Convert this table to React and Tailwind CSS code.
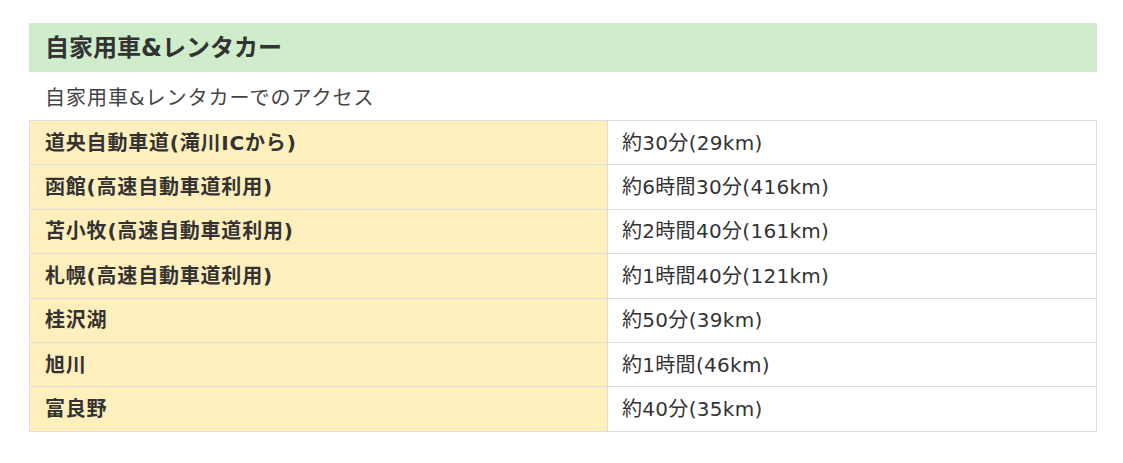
const rows = [
  ['道央自動車道(滝川ICから)', '約30分(29km)'],
  ['函館(高速自動車道利用)', '約6時間30分(416km)'],
  ['苫小牧(高速自動車道利用)', '約2時間40分(161km)'],
  ['札幌(高速自動車道利用)', '約1時間40分(121km)'],
  ['桂沢湖', '約50分(39km)'],
  ['旭川', '約1時間(46km)'],
  ['富良野', '約40分(35km)'],
];

export default function App() {
  return (
    <div className="min-h-screen bg-white text-[#333] font-['DejaVu_Sans','Noto_Sans_CJK_JP',sans-serif]">
      <div className="pt-[23px] pl-[29px] w-[1097px]">
        <h2 className="h-[49px] bg-[#cfeccb] px-[16px] flex items-center text-[24px] font-bold">
          自家用車&amp;レンタカー
        </h2>
        <p className="h-[48px] px-[16px] pt-[4px] flex items-center text-[20px] tracking-[1px] text-[#444]">
          自家用車&amp;レンタカーでのアクセス
        </p>
        <table className="w-full border-collapse text-[20px]">
          <tbody>
            {rows.map(([place, time]) => (
              <tr key={place} className="h-[44.4px]">
                <th className="w-[578px] border border-[#ddd] bg-[#ffefbd] px-[15px] py-0 text-left font-bold leading-[1.3] tracking-[0.8px]">
                  {place}
                </th>
                <td className="border border-[#ddd] bg-white px-[14px] py-0 leading-[1.3] tracking-[0.3px]">{time}</td>
              </tr>
            ))}
          </tbody>
        </table>
      </div>
    </div>
  );
}
